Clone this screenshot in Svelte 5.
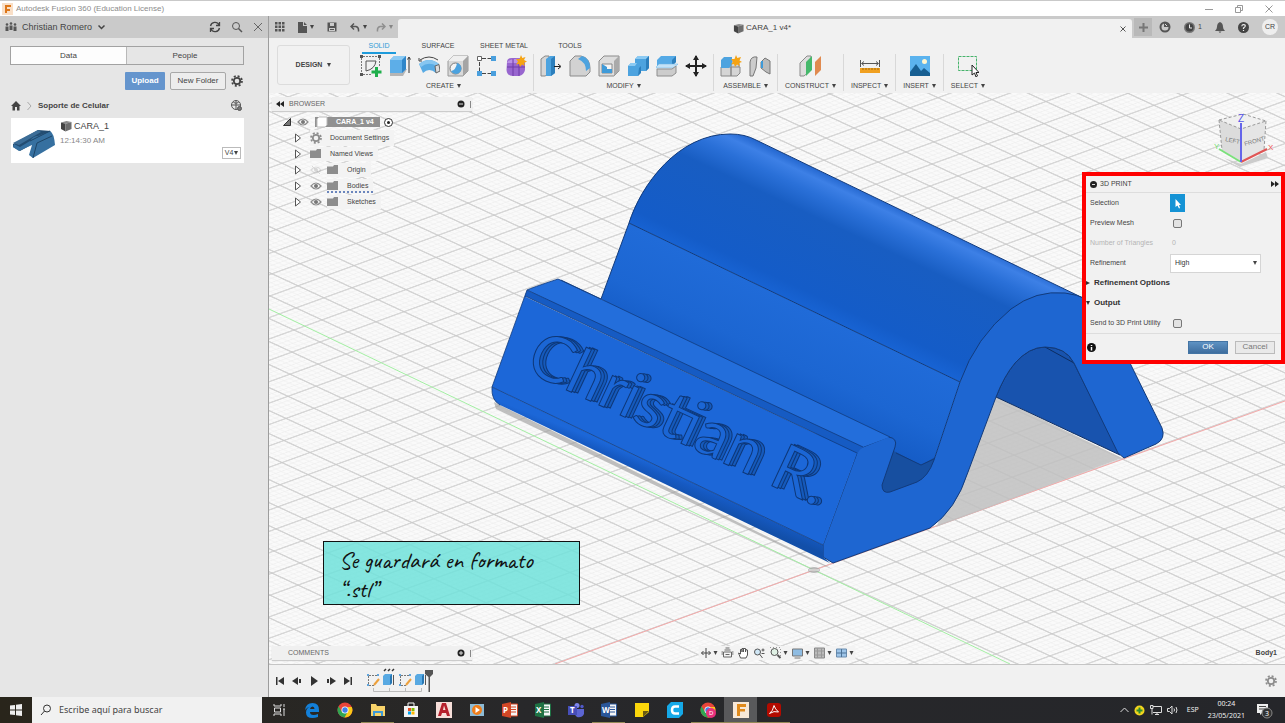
<script lang="ts">
	interface Group {
		label: string;
		icons: string[];
	}

	interface TreeNode {
		label: string;
		icon: 'gear' | 'folder';
		eye?: 'on' | 'off';
		marked?: boolean;
	}

	const groups: Group[] = [
		{ label: 'CREATE', icons: ['sketch', 'extrude', 'revolve', 'hole', 'pattern', 'form'] },
		{ label: 'MODIFY', icons: ['presspull', 'fillet', 'shell', 'combine', 'split', 'move'] },
		{ label: 'ASSEMBLE', icons: ['component', 'joint'] },
		{ label: 'CONSTRUCT', icons: ['plane'] },
		{ label: 'INSPECT', icons: ['measure'] },
		{ label: 'INSERT', icons: ['image'] },
		{ label: 'SELECT', icons: ['select'] }
	];

	const tree: TreeNode[] = [
		{ label: 'Document Settings', icon: 'gear' },
		{ label: 'Named Views', icon: 'folder' },
		{ label: 'Origin', icon: 'folder', eye: 'off' },
		{ label: 'Bodies', icon: 'folder', eye: 'on', marked: true },
		{ label: 'Sketches', icon: 'folder', eye: 'on' }
	];

	const apps = [
		'taskview', 'edge', 'chrome', 'explorer', 'store', 'autocad', 'media', 'powerpoint',
		'excel', 'teams', 'word', 'notes', 'cura', 'chrome-d', 'fusion', 'acrobat'
	];
	const running = ['explorer', 'word', 'chrome-d', 'fusion', 'acrobat'];
	const workspaceTabs = ['SOLID', 'SURFACE', 'SHEET METAL', 'TOOLS'];

	let activeTab = $state('SOLID');
	let panelTab = $state('Data');
	let previewMesh = $state(false);
	let sendToUtility = $state(false);
	let refinement = $state('High');
	let search = $state('');
</script>

{#snippet gear(size: number)}
	<svg width={size} height={size} viewBox="0 0 12 12" fill="none" stroke="currentColor">
		<circle cx="6" cy="6" r="3.2" stroke-width="1.8" />
		<circle cx="6" cy="6" r="5" stroke-width="1.7" stroke-dasharray="2 1.93" />
	</svg>
{/snippet}

{#snippet cube(size: number)}
	<svg width={size} height={size} viewBox="0 0 12 12">
		<path d="M1 2.5 6.5 1 11.5 2 5.5 3.8z" fill="#8a8a8a" />
		<path d="M1 2.5 5.5 3.8V11.5L1 9z" fill="#444" />
		<path d="M5.5 3.8 11.5 2V9L5.5 11.5z" fill="#6d6d6d" />
	</svg>
{/snippet}

{#snippet eye(off: boolean)}
	<svg width="12" height="10" viewBox="0 0 12 10" opacity={off ? 0.25 : 1}>
		<path d="M1 5Q6-1 11 5Q6 11 1 5Z" fill="none" stroke="#8c8c8c" stroke-width="1.2" />
		<circle cx="6" cy="5" r="2" fill="#777" />
		{#if off}<path d="M2 1 10 9" stroke="#777" />{/if}
	</svg>
{/snippet}

{#snippet tool(name: string)}
	<svg width="22" height="22" viewBox="0 0 22 22">
		{#if name === 'sketch'}
			<path d="M3 1.500H18M1.500 3V18M3 19.500H11M19.500 3V11" stroke="#777" stroke-dasharray="2 1" fill="none" />
			<path d="M6 6H16Q15 14 6 16Z" fill="none" stroke="#555" />
			<path d="M0 0h3v3H0zM18 0h3v3h-3zM0 18h3v3H0z" fill="#555" />
			<path d="M16.500 12V22M11.500 17H21.500" stroke="#1faf4b" stroke-width="3" />
		{:else if name === 'extrude'}
			<path d="M1 18 5 14H18L14 21H1z" fill="#b5b5b5" />
			<path d="M1 5 5 1H17V14L13 18H1z" fill="#5daee8" />
			<path d="M1 5 5 1H17L13 5z" fill="#8bcaf3" />
			<path d="M13 5 17 1V14L13 18z" fill="#2f86c9" />
			<path d="M20 18V3M18.500 4.500 20 2 21.500 4.500" stroke="#333" fill="none" />
		{:else if name === 'revolve'}
			<path d="M1 9Q11 1 21 9L18 18Q11 12 5 18Z" fill="#59abe4" />
			<path d="M1 9Q11 1 21 9L19 11Q10 6 3 12Z" fill="#87c6f0" />
			<path d="M17 11 21 9.500 22 16 18 18z" fill="#ddd" stroke="#666" />
			<path d="M2 5Q11-1 20 5M1 3V6H4" fill="none" stroke="#444" />
		{:else if name === 'hole'}
			<path d="M1 6 6 1H21V16L16 21H1z" fill="#d9d9d9" stroke="#999" />
			<path d="M1 6 6 1H21L16 6z" fill="#efefef" />
			<path d="M16 6 21 1V16L16 21z" fill="#a5a5a5" />
			<circle cx="8.500" cy="13.500" r="5.500" fill="#f3f3f3" stroke="#777" />
			<path d="M10 8A5.500 5.500 0 1 1 4 16Q9 15 10 8Z" fill="#4ba2df" />
		{:else if name === 'pattern'}
			<path d="M6 3.500H15M3.500 7V16M6 18.500H15" stroke="#444" stroke-dasharray="4 1.500" />
			<path d="M1.500 1.500h4v4h-4z" fill="#fff" stroke="#666" />
			<path d="M15 1h5v5h-5zM1 16h5v5H1zM15 16h5v5h-5z" fill="#4a9fdd" />
		{:else if name === 'form'}
			<path d="M2 7Q2 3 7 3H15Q20 4 20 9V15Q19 20 14 21H8Q2 21 1.500 15Z" fill="#9866cf" />
			<path d="M3 6Q8 3 16 4L14 8H2z" fill="#bb91e6" />
			<path d="M8 4V21M14 6V21M2 12H20" stroke="#6e3aa8" fill="none" />
			<path d="M16 0 17.300 3 20.500 2 19 5 22 6.500 19 8 20 11 17 9.500 15 12 14 9 11 9.500 13 6.500 11 4 14.500 4z" fill="#f5a313" />
		{:else if name === 'presspull'}
			<path d="M1 4 5 1H9V19L5 21H1z" fill="#d6d6d6" stroke="#888" />
			<path d="M6 4 10 1H15V18L11 21H6z" fill="#4da3df" />
			<path d="M11 4 15 1V18L11 21z" fill="#2c7fbd" />
			<path d="M14 11.500H20M18 9 21 11.500 18 14" stroke="#222" fill="none" />
		{:else if name === 'fillet'}
			<path d="M1 6 6 1H12Q21 3 21 13V17L17 21H1z" fill="#d2d2d2" stroke="#8b8b8b" />
			<path d="M9 4 13 1Q21 3 21 13L17 16Q17 7 9 4z" fill="#4da3df" />
		{:else if name === 'shell'}
			<path d="M1 6 6 1H21V16L16 21H1z" fill="#ddd" stroke="#8b8b8b" />
			<path d="M16 6 21 1V16L16 21z" fill="#aaa" />
			<path d="M4 9H14V18H4z" fill="#f5f5f5" stroke="#888" />
			<path d="M4 18V9L9 12V14H14V18z" fill="#3f9ad8" />
		{:else if name === 'combine'}
			<path d="M8 4 11 1H22V13L19 16H14L11 21H1V11L4 8H8z" fill="#4da3df" />
			<path d="M8 4 11 1H22L19 4zM1 11 4 8H10L8 11z" fill="#8bcaf3" />
			<path d="M19 4 22 1V13L19 16zM12 13 14 11V18L11 21z" fill="#2c7fbd" />
		{:else if name === 'split'}
			<path d="M1 5 5 1H20V7L16 11H1z" fill="#55aae6" />
			<path d="M16 5 20 1V7L16 11z" fill="#2c7fbd" />
			<path d="M0 12 3 9H22L18 13H0z" fill="#c3e2f7" stroke="#6ab2e2" stroke-width=".5" />
			<path d="M1 14H16L20 11V18L16 21H1z" fill="#ccc" stroke="#8e8e8e" />
		{:else if name === 'move'}
			<path d="M11 1V21M1 11H21" stroke="#222" stroke-width="2" />
			<path d="M11 0 14 5H8zM11 22 8 17h6zM0 11 5 8v6zM22 11 17 14V8z" fill="#222" />
		{:else if name === 'component'}
			<path d="M1 12H11V21H1zM11 12H20V18L17 21H11zM11 12V6H19V12" fill="#d5d5d5" stroke="#888" />
			<path d="M1 5 4 2H12V10L9 13H1z" fill="#4da3df" />
			<path d="M16 0 17.300 3 21 2 19.500 5.500 22 7 19 8 20 11 17 9.500 15 12 14 9 11 9.500 13 6.500 11 4 14.500 4z" fill="#f5a313" />
		{:else if name === 'joint'}
			<path d="M1 7Q2 1 8 2L7 13 4 21H1z" fill="#ccc" stroke="#777" />
			<path d="M12 7 16 3 21 6V19L17 17 12 13z" fill="#bbb" stroke="#777" />
			<path d="M13 6V13" stroke="#3f9ad8" stroke-width="2" />
		{:else if name === 'plane'}
			<path d="M1 8 8 1H12V15L5 21H1z" fill="#ddd" stroke="#8b8b8b" />
			<path d="M7 7 13 1V15L7 21z" fill="#45b86b" />
			<path d="M16 7 22 1V15L16 21z" fill="#e08a4f" />
		{:else if name === 'measure'}
			<path d="M1 13H21V18H1z" fill="#f0a020" />
			<path d="M4 13v2M7 13v2M10 13v2M13 13v2M16 13v2M19 13v2" stroke="#a36a08" />
			<path d="M1.500 5V12M20.500 5V12M3 8.500H19M5 6.500 2.500 8.500 5 10.500M17 6.500 19.500 8.500 17 10.500" stroke="#555" fill="none" />
		{:else if name === 'image'}
			<path d="M1 1H21V21H1z" fill="#5bb3ee" />
			<path d="M1 17 7 9 12 16 15 13 21 18V21H1z" fill="#175f92" />
			<circle cx="15.500" cy="6.500" r="2.500" fill="#fff6cf" />
		{:else if name === 'select'}
			<path d="M1.500 1.500H19.500V15.500H1.500z" fill="none" stroke="#46b36b" stroke-dasharray="3 1" />
			<path d="M15 10V20L17.500 18 19 22 20.500 21 19 17.500H22z" fill="#fff" stroke="#222" />
		{/if}
	</svg>
{/snippet}

{#snippet chromeMark()}
	<circle cx="8" cy="8" r="7.500" fill="#e8443a" />
	<path d="M1.500 4.300A7.500 7.500 0 0 0 7.500 15.500L11 10 5 10z" fill="#2fa652" />
	<path d="M14.800 5A7.500 7.500 0 0 1 7.500 15.500L11 9.500V5z" fill="#fbc816" />
	<circle cx="8" cy="8" r="3.500" fill="#fff" />
	<circle cx="8" cy="8" r="2.700" fill="#3f7fea" />
{/snippet}

{#snippet appIcon(name: string)}
	<svg width="16" height="16" viewBox="0 0 16 16">
		{#if name === 'taskview'}
			<path d="M3 2V4H10V2M3 14V12H10V14M3.500 6H9.500V10H3.500zM13 2V5M13 7V14M12 7H14" fill="none" stroke="#ddd" />
		{:else if name === 'edge'}
			<path d="M1 8Q2 1 8.500 1Q15 1 15 8V10H6Q6 13 9.500 13Q12 13 14 12V15Q11 16 8.500 16Q2 16 2 10.500Q2 6 6.500 4.500Q3 5 1 8ZM6 7H10.500Q10.500 4.500 8.500 4.500Q6.500 4.500 6 7Z" fill="#1380da" />
		{:else if name === 'chrome'}
			{@render chromeMark()}
		{:else if name === 'explorer'}
			<path d="M1 2H6L7 4H15V14H1z" fill="#f8d36a" />
			<path d="M3 14V9H13V14H11V11H5V14z" fill="#3e9ad6" />
		{:else if name === 'store'}
			<path d="M1 4H15V15H1z" fill="#f4f4f4" />
			<path d="M5 4V1H11V4" stroke="#f4f4f4" fill="none" />
			<path d="M5 6h3v3H5z" fill="#e74e27" /><path d="M8.500 6h3v3h-3z" fill="#7fba00" />
			<path d="M5 9.500h3v3H5z" fill="#00a3ee" /><path d="M8.500 9.500h3v3h-3z" fill="#ffb901" />
		{:else if name === 'autocad'}
			<path d="M0 0H16V16H0z" fill="#f6ded9" />
			<path d="M2 14 6 1H10L14 14H11L10 11H6L5 14zM7 8H9.500L8 3.500z" fill="#b51f2b" fill-rule="evenodd" />
		{:else if name === 'media'}
			<path d="M1 2H15V14H1z" fill="#8dbbd6" />
			<circle cx="8" cy="8" r="5" fill="#ef7d1a" /><path d="M6.500 5 11 8 6.500 11z" fill="#fff" />
		{:else if name === 'powerpoint' || name === 'excel' || name === 'word'}
			{@const color = { powerpoint: '#d24726', excel: '#1f7244', word: '#2a5699' }[name]}
			<path d="M7 2H15.500V14H7z" fill="#f5f5f5" stroke={color} />
			<path d="M9 5H14M9 7.500H14M9 10H14" stroke={color} />
			<path d="M0 2 9 0V16L0 14z" fill={color} />
			<text x="1" y="11" font-size="8" font-weight="bold" fill="#fff">{name === 'powerpoint' ? 'P' : name === 'excel' ? 'X' : 'W'}</text>
		{:else if name === 'teams'}
			<circle cx="9" cy="3.500" r="2.500" fill="#7b83eb" /><circle cx="14" cy="4.500" r="1.700" fill="#5059c9" />
			<path d="M6 7H16V12Q14 16 9 15Q6 13 6 7z" fill="#5c65d3" />
			<path d="M0 4H9V13H0z" fill="#464eb8" />
			<text x="2" y="11" font-size="8" font-weight="bold" fill="#fff">T</text>
		{:else if name === 'notes'}
			<path d="M1 1H15V10L9 15H1z" fill="#fbd60b" /><path d="M9 9H15L9 15z" fill="#695a12" />
		{:else if name === 'cura'}
			<path d="M4 0H16V12L12 16H0V4z" fill="#15a9e8" />
			<path d="M12 4.500H8Q5 4.500 5 8Q5 11.500 8 11.500H12" fill="none" stroke="#fff" stroke-width="2.500" />
		{:else if name === 'chrome-d'}
			{@render chromeMark()}
			<circle cx="11" cy="11" r="5" fill="#e8307c" />
			<text x="9" y="13" font-size="6" fill="#fff">D</text>
		{:else if name === 'fusion'}
			<path d="M0 0H16V16H0z" fill="#f8e8d7" />
			<path d="M4 2H13V5H7V7H12V9.500H7V14H4z" fill="#e08a1c" />
		{:else if name === 'acrobat'}
			<rect x="1" y="1" width="14" height="14" rx="3" fill="#b30b00" />
			<path d="M8 3.500Q9 7 12.500 10Q8 8.500 3.500 11.500Q7 9 8 3.500Z" fill="none" stroke="#fff" />
		{/if}
	</svg>
{/snippet}

<div class="desktop">
	<header class="title-bar">
		<svg width="11" height="12" viewBox="0 0 11 12">
			<path d="M0 0H11V12H0z" fill="#f9dfc7" /><path d="M3 2H9V4H5V6H8V8H5V10H3z" fill="#dd7618" />
		</svg>
		<span class="title">Autodesk Fusion 360 (Education License)</span>
		<div class="window-buttons">
			<button aria-label="Minimize"><svg width="8" height="8"><path d="M0 4.500H8" /></svg></button>
			<button aria-label="Restore"><svg width="8" height="8"><path d="M.5 2.500H5.500V7.500H.5zM2.500 2.500V.5H7.500V5.500H5.500" /></svg></button>
			<button aria-label="Close"><svg width="8" height="8"><path d="M.5.5 7.500 7.500M7.500.5.5 7.500" /></svg></button>
		</div>
	</header>

	<div class="app">
		<aside class="data-panel">
			<div class="panel-header">
				<svg width="12" height="10" viewBox="0 0 12 10" fill="#555">
					<circle cx="2" cy="2.500" r="1.300" /><circle cx="6" cy="1.500" r="1.300" /><circle cx="10" cy="2.500" r="1.300" />
					<path d="M.5 4.500h3V9h-3zM4.500 3.500h3V8h-3zM8.500 4.500h3V9h-3z" />
				</svg>
				<button class="team">Christian Romero
					<svg width="7" height="5" viewBox="0 0 7 5"><path d="M.5.5 3.500 3.500 6.500.5" fill="none" stroke="#444" stroke-width="1.500" /></svg>
				</button>
				<button class="push" aria-label="Refresh">
					<svg width="12" height="12" viewBox="0 0 12 12" fill="none" stroke="#444" stroke-width="1.300"><path d="M1.500 5A4.500 4.500 0 0 1 10 4M10.500 7A4.500 4.500 0 0 1 2 8M10.500 1V4.500H7M1.500 11V7.500H5" /></svg>
				</button>
				<button aria-label="Search">
					<svg width="12" height="12" viewBox="0 0 12 12" fill="none" stroke="#555"><circle cx="5" cy="5" r="3.500" /><path d="M7.500 7.500 11 11" stroke-width="1.500" /></svg>
				</button>
				<button aria-label="Close panel">
					<svg width="10" height="10" viewBox="0 0 10 10" stroke="#666"><path d="M1 1 9 9M9 1 1 9" /></svg>
				</button>
			</div>
			<div class="panel-body">
				<div class="segmented">
					{#each ['Data', 'People'] as tab (tab)}
						<button class:active={panelTab === tab} onclick={() => (panelTab = tab)}>{tab}</button>
					{/each}
				</div>
				<div class="panel-actions">
					<button class="upload">Upload</button>
					<button class="new-folder">New Folder</button>
					<button class="plain" aria-label="Settings">{@render gear(12)}</button>
				</div>
				<div class="breadcrumb">
					<svg width="10" height="10" viewBox="0 0 10 10" fill="#444"><path d="M0 5 5 0 10 5H8.500V9.500H6V6H4V9.500H1.500V5z" /></svg>
					<svg width="5" height="10" viewBox="0 0 5 10"><path d="M.5 1 4 5 .5 9" fill="none" stroke="#aaa" /></svg>
					<strong>Soporte de Celular</strong>
					<svg class="push" width="11" height="11" viewBox="0 0 11 11" fill="none" stroke="#555">
						<circle cx="5" cy="5" r="4.500" /><path d="M.5 5H9.500M5 .5V9.500M2.500 2.500Q5 4 7.500 2.500" /><circle cx="8.500" cy="8.500" r="2" fill="#777" />
					</svg>
				</div>
				<div class="file-card">
					<svg width="45" height="45" viewBox="0 0 45 45">
						<path d="M2 26 27 12 40 13 18 28 9 33 2 29z" fill="#234d72" />
						<path d="M2 25 27 12 30 14 8 27z" fill="#3c6d97" />
						<path d="M19 23Q22 18 27 18L39 13Q43 15 44 27L22 40 18 37 21 27 8 33 2 29 3 26 9 29z" fill="#3670a0" />
						<path d="M19 23 39 13M22 40 26 25 41 18" stroke="#1e4567" fill="none" />
					</svg>
					<div class="file-info">
						<span class="file-name">{@render cube(12)} CARA_1</span>
						<span class="file-time">12:14:30 AM</span>
					</div>
					<button class="version">V4<i class="caret"></i></button>
				</div>
			</div>
		</aside>

		<main class="workspace">
			<div class="tab-bar">
				<div class="quick-access">
					<button aria-label="Show data panel"><svg width="10" height="10" fill="#555"><path d="M0 0h2.500v2.500H0zM3.500 0H6v2.500H3.500zM7 0h2.500v2.500H7zM0 3.500h2.500V6H0zM3.500 3.500H6V6H3.500zM7 3.500h2.500V6H7zM0 7h2.500v2.500H0zM3.500 7H6v2.500H3.500zM7 7h2.500v2.500H7z" /></svg></button>
					<button aria-label="File"><svg width="9" height="11" fill="#555"><path d="M0 0H5V4H9V11H0zM6 0 9 3H6z" /></svg><i class="caret"></i></button>
					<button aria-label="Save"><svg width="10" height="10" viewBox="0 0 10 10"><path d="M.5.5H9.500V9.500H.5z" fill="#555" /><path d="M3 1H7V4H3zM2 6H8V9H2z" fill="#ccc" /><path d="M3 7.500H7" stroke="#555" /></svg></button>
					<button aria-label="Undo"><svg width="10" height="9" viewBox="0 0 10 9" fill="none" stroke="#555" stroke-width="1.500"><path d="M4 .5 1 3.500 4 6.500M1 3.500H6Q9 4 8.500 8.500" /></svg><i class="caret"></i></button>
					<button class="dim" aria-label="Redo"><svg width="10" height="9" viewBox="0 0 10 9" fill="none" stroke="#555" stroke-width="1.500"><path d="M6 .5 9 3.500 6 6.500M9 3.500H4Q1 4 1.500 8.500" /></svg><i class="caret"></i></button>
				</div>
				<div class="document-tab">
					<span>{@render cube(11)} CARA_1 v4*</span>
					<button aria-label="Close tab"><svg width="6" height="6" stroke="#555"><path d="M.5.5 5.500 5.500M5.500.5.5 5.500" /></svg></button>
				</div>
				<div class="account">
					<button class="new-tab" aria-label="New tab"><svg width="9" height="9"><path d="M4.500 0V9M0 4.500H9" stroke="#777" stroke-width="2" /></svg></button>
					<button aria-label="Extensions"><svg width="12" height="12" viewBox="0 0 12 12"><circle cx="6" cy="6" r="4.500" fill="none" stroke="#555" stroke-width="2" /><path d="M5 1V6H10V3z" fill="#555" /><path d="M6 3 8 5" stroke="#ddd" /></svg></button>
					<button aria-label="Job status"><svg width="11" height="11" viewBox="0 0 11 11"><circle cx="5.500" cy="5.500" r="5.500" fill="#777" /><circle cx="5.500" cy="5.500" r="4" fill="#444" /><path d="M5.500 2.500V6H8" stroke="#eee" fill="none" /></svg><small>1</small></button>
					<button aria-label="Notifications"><svg width="10" height="11" fill="#555"><path d="M5 0Q8 1 8 5Q8 7 10 9H0Q2 7 2 5Q2 1 5 0zM3.500 9.500h3L5 11z" /></svg></button>
					<button aria-label="Help"><svg width="11" height="11"><circle cx="5.500" cy="5.500" r="5.500" fill="#444" /><path d="M3.800 4.200Q4 2.500 5.600 2.500Q7.500 2.700 7.200 4.200Q7 5 5.500 6V7M5.500 8V9" fill="none" stroke="#eee" stroke-width="1.200" /></svg></button>
					<button class="avatar">CR</button>
				</div>
			</div>

			<div class="ribbon">
				<button class="workspace-switch">DESIGN<i class="caret"></i></button>
				<div class="ribbon-main">
					<nav class="ribbon-tabs">
						{#each workspaceTabs as tab (tab)}
							<button class:active={activeTab === tab} onclick={() => (activeTab = tab)}>{tab}</button>
						{/each}
					</nav>
					<div class="groups">
						{#each groups as group (group.label)}
							<div class="group">
								<div class="group-icons">
									{#each group.icons as name (name)}
										<button aria-label={name}>{@render tool(name)}</button>
									{/each}
								</div>
								<button class="group-label">{group.label}<i class="caret"></i></button>
							</div>
						{/each}
					</div>
				</div>
			</div>

			<div class="viewport">
				<!-- Scene coordinates are window pixels, origin at the window's top left -->
				<svg class="scene" viewBox="269 93 1016 571" preserveAspectRatio="xMidYMid slice">
					<defs>
						<pattern id="grid" width="5" height="5" patternUnits="userSpaceOnUse" patternTransform="matrix(5.2 2.4 5.6 -2.02 814 570)">
							<path d="M1 0V5M2 0V5M3 0V5M4 0V5M0 1H5M0 2H5M0 3H5M0 4H5" stroke="#f0f0f0" stroke-width=".2" />
							<path d="M0 0H5V5H0z" fill="none" stroke="#c8c8c8" stroke-width=".24" />
						</pattern>
						<linearGradient id="ridge" gradientUnits="userSpaceOnUse" x1="900" y1="208" x2="825" y2="368">
							<stop offset="0" stop-color="#2467cf" />
							<stop offset=".05" stop-color="#3d80e6" />
							<stop offset=".13" stop-color="#2a70d8" />
							<stop offset=".25" stop-color="#185dc2" />
							<stop offset=".65" stop-color="#145cc8" />
							<stop offset=".84" stop-color="#1b6be0" />
							<stop offset="1" stop-color="#1d6be0" />
						</linearGradient>
						<linearGradient id="wall" gradientUnits="userSpaceOnUse" x1="810" y1="310" x2="770" y2="395">
							<stop offset="0" stop-color="#206bd8" />
							<stop offset=".6" stop-color="#1c66d2" />
							<stop offset="1" stop-color="#155cc6" />
						</linearGradient>
						<linearGradient id="roll" gradientUnits="userSpaceOnUse" x1="660" y1="465" x2="652" y2="485">
							<stop offset="0" stop-color="#1c67d8" />
							<stop offset=".4" stop-color="#165ac3" />
							<stop offset="1" stop-color="#124fa9" />
						</linearGradient>
					</defs>
					<rect x="269" y="93" width="1016" height="571" fill="#fafafa" />
					<rect x="269" y="93" width="1016" height="571" fill="url(#grid)" />
					<path d="M269 309 814 570 1010 664" stroke="#a3efa3" fill="none" />
					<path d="M555 664 814 570 1285 401" stroke="#f4aaaa" fill="none" />
					<path d="M996 397 1122 458 936 527 960 480z" fill="#bfbfbf" opacity=".85" />
					<path d="M494 402 825 565 832 569 815 562 496 409z" fill="#999" opacity=".6" />

					<g stroke-linejoin="round">
						<path d="M996 397Q1004 376 1015 363Q1029 347 1045 347Q1066 347 1074 363L1120 455z" fill="#1853ae" stroke="#102f63" />
						<path d="M1045 347 1074 363" stroke="#0c2d62" />
						<path d="M601 299 629 223 960 382 934 460 916 488 885 490 850 455z" fill="url(#wall)" />
						<path d="M892 450 921 465 937 456 926 484 885 496 878 485z" fill="#174fa0" />
						<path d="M896 453 921 465 934 459" fill="none" stroke="#123b7c" />
						<path d="M629 223C641 185 678 134 730 134Q745 134 756 140L1083 298Q1000 290 960 382z" fill="url(#ridge)" />
						<path d="M730 134C678 134 641 185 629 223L601 299M730 134Q745 134 756 140L1083 298M629 223 960 382" fill="none" stroke="#123b7c" />
						<path d="M960 382Q976 337 1011 309Q1036 290 1065 293Q1090 296 1100 312L1128 359 1162 428Q1166 439 1156 444L1124 458 1118 453 1074 363Q1066 347 1045 347Q1029 347 1015 363Q1004 376 996 397L968 472Q956 510 930 528L833 563 823 557 823 545 857 453Q859 448 863 447L888 437Q898 438 895 447L882 485Q882 494 890 492L917 482Q928 477 934 460Z" fill="#1e66d1" stroke="#123b7c" />
						<path d="M527 290Q531 288 558 279L561 280 890 437 863 447 857 453z" fill="#236edb" />
						<path d="M527 290 526 297 857 453 823 545 492 387z" fill="#1c67d8" />
						<path d="M527 290 863 447 857 453 525 296z" fill="#165bc3" />
						<path d="M492 387 823 545 823 557 830 563 500 405Q491 400 492 387z" fill="url(#roll)" />
						<path d="M527 290 863 447M525 296 857 453M492 387 823 545M561 280 890 437M527 290Q531 288 558 279L601 299M527 290 492 387Q491 400 500 405" fill="none" stroke="#123b7c" stroke-width=".8" />
					</g>

					<g class="engraving" transform="translate(524 369) rotate(25)">
						<text x="6" y="-1" fill="#155abc">Christian R.</text>
						<text x="3" y="0" fill="#155abc">Christian R.</text>
						<text x="0" y="1" fill="#1b66d5">Christian R.</text>
					</g>

					<ellipse cx="814" cy="570" rx="6" ry="3" fill="#aaa" opacity=".8" />
					<path d="M809 570H819" stroke="#eee" />

					<g class="view-cube">
						<path d="M1224 158 1241 164 1266 152 1268 158 1240 167z" fill="#ccc" />
						<path d="M1219 120 1243 114 1266 121 1241 129z" fill="#f0f0f0" />
						<path d="M1219 120 1241 129V161L1222 150z" fill="#dcdcdc" />
						<path d="M1266 121 1241 129V161L1264 150z" fill="#e5e5e5" />
						<path d="M1219 120 1243 114 1266 121 1241 129zM1219 120 1222 150M1266 121 1264 150" fill="none" stroke="#999" stroke-dasharray="3 2" />
						<path d="M1241 162 1219 149" stroke="#7be07b" stroke-width="2" />
						<path d="M1241 162 1267 149" stroke="#e05555" stroke-width="2" />
						<path d="M1241 162V123" stroke="#6565ea" stroke-width="2" />
						<text x="1238" y="122" font-size="10" fill="#5555e8">Z</text>
						<text x="1214" y="149" font-size="8" fill="#70e070">Y</text>
						<text x="1268" y="150" font-size="8" fill="#ee5555">X</text>
						<text x="1225" y="141" font-size="6" fill="#777" transform="rotate(12 1225 141)">LEFT</text>
						<text x="1245" y="146" font-size="6" fill="#777" transform="rotate(-16 1245 146)">FRONT</text>
					</g>
				</svg>

				<div class="dock">
					<section class="browser">
						<div class="dock-bar">
							<svg width="8" height="6"><path d="M4 0V6L0 3zM8 0V6L4 3z" fill="#222" /></svg>
							<span>BROWSER</span>
							<svg class="push" width="8" height="8"><circle cx="4" cy="4" r="3.500" fill="#222" /><path d="M2 4H6" stroke="#ddd" /></svg>
							<i class="grip"></i>
						</div>
						<div class="tree">
							<div class="root-row">
								<svg width="8" height="8"><path d="M7.500.5V7.500H.5z" fill="#777" stroke="#333" /></svg>
								{@render eye(false)}
								<span class="root-name">
									<svg width="12" height="12" viewBox="0 0 12 12"><path d="M1 3 3 1H11V9L9 11H1z" fill="#fff" stroke="#bbb" /></svg>
									CARA_1 v4
								</span>
								<svg width="9" height="9"><circle cx="4.500" cy="4.500" r="4" fill="#fff" stroke="#333" /><circle cx="4.500" cy="4.500" r="1.500" fill="#222" /></svg>
							</div>
							{#each tree as node (node.label)}
								<div class="tree-row" class:has-eye={node.eye}>
									<svg width="6" height="10"><path d="M.5 1 5.500 5 .5 9z" fill="#fff" stroke="#555" /></svg>
									{#if node.eye}{@render eye(node.eye === 'off')}{/if}
									<span class="node" class:marked={node.marked}>
										{#if node.icon === 'gear'}
											{@render gear(12)}
										{:else}
											<svg width="12" height="10" fill="#8d8d8d"><path d="M0 1.500H6L7 0H11V9H0z" /></svg>
										{/if}
										<span>{node.label}</span>
									</span>
								</div>
							{/each}
						</div>
					</section>
					<div class="dock-bar comments">
						<span>COMMENTS</span>
						<svg class="push" width="8" height="8"><circle cx="4" cy="4" r="3.500" fill="#222" /><path d="M2 4H6M4 2V6" stroke="#ddd" /></svg>
						<i class="grip"></i>
					</div>
				</div>

				<p class="note">Se guardará en formato “.stl”</p>

				<form class="dialog" onsubmit={(e) => e.preventDefault()}>
					<div class="dialog-title">
						<svg width="7" height="7"><circle cx="3.500" cy="3.500" r="3.500" fill="#222" /><path d="M2 3.500H5" stroke="#ddd" /></svg>
						3D PRINT
						<svg class="push" width="8" height="6"><path d="M0 0V6L4 3zM4 0V6L8 3z" fill="#222" /></svg>
					</div>
					<div class="field">
						<span>Selection</span>
						<button type="button" class="pick" aria-label="Pick body"><svg width="8" height="11"><path d="M1.500 1V9L3.500 7.500 5 10.500 6 10 5 7H7z" fill="#fff" /></svg></button>
					</div>
					<div class="field">
						<label for="mesh">Preview Mesh</label>
						<input id="mesh" type="checkbox" bind:checked={previewMesh} />
					</div>
					<div class="field disabled"><span>Number of Triangles</span><span>0</span></div>
					<div class="field">
						<label for="refinement">Refinement</label>
						<div class="drop">
							<select id="refinement" bind:value={refinement}>
								<option>High</option>
								<option>Medium</option>
								<option>Low</option>
							</select>
							<i class="caret"></i>
						</div>
					</div>
					<button type="button" class="fold"><i class="caret right"></i>Refinement Options</button>
					<button type="button" class="fold"><i class="caret"></i>Output</button>
					<div class="field">
						<label for="utility">Send to 3D Print Utility</label>
						<input id="utility" type="checkbox" bind:checked={sendToUtility} />
					</div>
					<div class="dialog-footer">
						<svg width="9" height="9"><circle cx="4.500" cy="4.500" r="4.500" fill="#111" /><path d="M4.500 2V3M4.500 4V7.500" stroke="#fff" stroke-width="1.500" /></svg>
						<button class="ok push">OK</button>
						<button type="button" class="cancel">Cancel</button>
					</div>
				</form>

				<div class="nav-bar">
					<button aria-label="Orbit"><svg width="11" height="12" fill="none" stroke="#444"><path d="M5.500 1V11M1 6H10M3 4 1 6 3 8M8 4 10 6 8 8" /></svg><i class="caret"></i></button>
					<button aria-label="Look at"><svg width="12" height="12" fill="none" stroke="#666"><path d="M2 5H10V10H2zM3 3H9M4 1H8M.5 4V8M11.500 4V8M4 7.500H8" /></svg></button>
					<button aria-label="Pan"><svg width="12" height="12" fill="#fff" stroke="#555"><path d="M3 11 1 6 3 7V2.500H4.500V5 1.500H6V5 1.500H8V5L8.500 2.500 10 3V8L8.500 11z" /></svg></button>
					<button aria-label="Zoom"><svg width="12" height="12" fill="none" stroke="#555"><circle cx="4" cy="5" r="3" fill="#cfe6f5" /><path d="M6 7 9 11M8 3H11M9.500 1.500V4.500M8 6.500H11" /></svg></button>
					<button aria-label="Fit"><svg width="12" height="12" fill="none" stroke="#555"><circle cx="5" cy="5" r="3.500" fill="#dff0e4" /><path d="M8 8 11 11" stroke-width="2" /><path d="M.5.5H11V11" stroke-dasharray="1 2" stroke="#999" /></svg><i class="caret"></i></button>
					<button aria-label="Display"><svg width="12" height="12"><path d="M1 2H11V9H1z" fill="#8fbce2" stroke="#777" /><path d="M3 11H9" stroke="#777" /></svg><i class="caret"></i></button>
					<button aria-label="Grid"><svg width="12" height="12"><path d="M1 1H11V11H1z" fill="#bbb" stroke="#888" /><path d="M4 1V11M8 1V11M1 4H11M1 8H11" stroke="#999" /></svg><i class="caret"></i></button>
					<button aria-label="Viewports"><svg width="12" height="12"><path d="M1 2H11V10H1z" fill="#9dc4e8" stroke="#6a8cae" /><path d="M6 2V10M1 6H11" stroke="#4d7397" /></svg><i class="caret"></i></button>
				</div>
				<strong class="selection-name">Body1</strong>
			</div>

			<footer class="timeline">
				<div class="transport">
					<button aria-label="To start"><svg width="10" height="10"><path d="M1 1H2.500V9H1zM9 1V9L3 5z" /></svg></button>
					<button aria-label="Step back"><svg width="10" height="10"><path d="M6 1V9L0 5zM7 3H9V7H7z" /></svg></button>
					<button aria-label="Play"><svg width="10" height="10"><path d="M2 0V10L9 5z" /></svg></button>
					<button aria-label="Step forward"><svg width="10" height="10"><path d="M4 1V9L10 5zM1 3H3V7H1z" /></svg></button>
					<button aria-label="To end"><svg width="10" height="10"><path d="M1 1V9L7 5zM7.500 1H9V9H7.500z" /></svg></button>
				</div>
				<svg width="68" height="26" viewBox="0 0 68 26">
					{#each [0, 32] as x (x)}
						<g transform="translate({x} 0)">
							<path d="M2 7.500H11M1.500 8V16M2 17.500H8" stroke="#777" stroke-dasharray="2 1" fill="none" />
							<path d="M0 6h2v2H0zM10 6h2v2h-2zM0 16h2v2H0z" fill="#60a5dd" />
							<path d="M7 17 12 11" stroke="#eda13d" stroke-width="2" />
							<path d="M16 8 18 6H25V15L23 17H16z" fill="#58a9e2" />
							<path d="M23 8 25 6V15L23 17z" fill="#2877b3" />
							<path d="M26.500 17V7" stroke="#555" />
						</g>
					{/each}
					<path d="M17 3 19 1M21 3 23 1M25 3 27 1" stroke="#333" stroke-width="1.500" />
					<path d="M6.500 20V23.500H54.500V20M22.500 20V23M38.500 20V23" fill="none" stroke="#bbb" />
					<path d="M58 2H66V6L63 9V24H61.500V9L58 6z" fill="#555" />
				</svg>
				<button class="push" aria-label="Timeline settings">{@render gear(12)}</button>
			</footer>
		</main>
	</div>

	<div class="taskbar">
		<button class="start" aria-label="Start"><svg width="12" height="12" fill="#eee"><path d="M0 1.500 5 1V5.500H0zM6 .8 12 0V5.500H6zM0 6.500H5V11L0 10.500zM6 6.500H12V12L6 11.200z" /></svg></button>
		<label class="search">
			<svg width="12" height="12" fill="none" stroke="#333"><circle cx="7" cy="4.500" r="3.500" /><path d="M4.500 7 1 11" /></svg>
			<input type="text" placeholder="Escribe aquí para buscar" bind:value={search} />
		</label>
		<div class="apps">
			{#each apps as name (name)}
				<button class:running={running.includes(name)} class:current={name === 'fusion'} aria-label={name}>{@render appIcon(name)}</button>
			{/each}
		</div>
		<div class="tray">
			<svg width="9" height="6"><path d="M.5 5 4.500 1 8.500 5" fill="none" stroke="#ddd" /></svg>
			<svg width="11" height="11"><circle cx="5.500" cy="5.500" r="5" fill="#f2d51d" /><path d="M5.500 2.500V8.500M2.500 5.500H8.500" stroke="#2d8b30" stroke-width="2" /></svg>
			<svg width="12" height="10" fill="none" stroke="#ddd"><path d="M3 1.500H11.500V7.500H3M.5.5H3V3.500H.5zM2 4V9.500M5 9.500H9M7 8V9" /></svg>
			<svg width="11" height="10" fill="none" stroke="#ddd"><path d="M.5 3.500H2.500L5 1V9L2.500 6.500H.5zM7 3.500Q8 5 7 6.500M9 2Q11 5 9 8" /></svg>
			<span class="lang">ESP</span>
			<time>00:24<br />23/05/2021</time>
			<svg width="17" height="18" viewBox="0 0 17 18"><path d="M1 3H12V12H6L4 14V12H1z" fill="#eee" /><path d="M3 5.500H10M3 8H10" stroke="#444" /><circle cx="11" cy="12" r="5" fill="#333" stroke="#888" /><text x="9" y="15" font-size="7" fill="#fff">3</text></svg>
		</div>
	</div>
</div>

<style>
	:global(body) {
		font-family: 'Liberation Sans', Arial, sans-serif;
		font-size: 8px;
		color: #444;
	}

	.desktop {
		display: flex;
		flex-direction: column;
		min-height: 100vh;
		line-height: 10px;
	}

	button {
		display: flex;
		align-items: center;
		justify-content: center;
		gap: 3px;
		padding: 0;
		border: none;
		background: none;
		color: inherit;
		font: inherit;
		white-space: nowrap;
	}

	svg {
		display: block;
		flex-shrink: 0;
	}

	.push {
		margin-left: auto;
	}

	.caret {
		border: 2px solid transparent;
		border-top: 4px solid currentColor;
		border-bottom: none;
	}

	.caret.right {
		border: 2px solid transparent;
		border-left: 4px solid currentColor;
		border-right: none;
	}

	.title-bar {
		display: flex;
		align-items: center;
		gap: 3px;
		height: 15px;
		padding-left: 2px;
		border-top: 1px solid #c9c9c9;
		background: #fff;
	}

	.title {
		color: #8b8b8b;
	}

	.window-buttons {
		display: flex;
		gap: 22px;
		margin-left: auto;
		padding-right: 12px;
		fill: none;
		stroke: #999;
	}

	.app {
		display: flex;
		flex: 1;
	}

	.data-panel {
		flex: 0 0 268px;
		border-right: 1px solid #9d9d9d;
		background: #e6e6e6;
	}

	.panel-header {
		display: flex;
		align-items: center;
		gap: 10px;
		height: 22px;
		padding: 0 5px;
		background: #cacaca;
	}

	.team {
		gap: 6px;
		margin-left: -5px;
		font-size: 9px;
	}

	.panel-body {
		display: flex;
		flex-direction: column;
		padding: 8px 24px 8px 10px;
	}

	.segmented {
		display: grid;
		grid-template-columns: 1fr 1fr;
		height: 17px;
		border: 1px solid #a2a2a2;
	}

	.segmented .active {
		border-right: 1px solid #b9b9b9;
		background: #fdfdfd;
	}

	.panel-actions {
		display: flex;
		justify-content: flex-end;
		gap: 5px;
		margin: 7px 1px 0 0;
	}

	.panel-actions button {
		height: 18px;
	}

	.upload {
		width: 40px;
		background: #6595cd;
		border-radius: 1px;
		color: #fff;
		font-weight: bold;
	}

	.panel-actions .new-folder {
		width: 56px;
		border: 1px solid #a8a8a8;
		border-radius: 2px;
		background: #ededed;
	}

	.breadcrumb {
		display: flex;
		align-items: center;
		gap: 6px;
		height: 25px;
		padding: 3px 2px 0 1px;
	}

	.file-card {
		display: flex;
		height: 45px;
		margin-left: 1px;
		background: #fff;
	}

	.file-info {
		display: flex;
		flex-direction: column;
		gap: 4px;
		padding: 2px 4px;
	}

	.file-name {
		display: flex;
		align-items: center;
		gap: 2px;
		font-size: 9px;
	}

	.file-time {
		color: #888;
	}

	.version {
		align-self: flex-end;
		width: 19px;
		height: 12px;
		margin: 0 3px 4px auto;
		border: 1px solid #bbb;
		font-size: 7px;
		gap: 1px;
	}

	.workspace {
		display: flex;
		flex: 1;
		flex-direction: column;
		min-width: 0;
	}

	.tab-bar {
		display: flex;
		height: 22px;
		background: #cacaca;
	}

	.quick-access {
		display: flex;
		align-items: center;
		gap: 13px;
		width: 123px;
		padding-left: 6px;
	}

	.quick-access .dim {
		margin-left: -4px;
		opacity: 0.5;
	}

	.document-tab {
		display: flex;
		flex: 1;
		align-items: center;
		justify-content: center;
		margin-top: 3px;
		padding: 0 6px;
		border-radius: 3px 3px 0 0;
		background: #f1f1f1;
	}

	.document-tab span {
		display: flex;
		gap: 2px;
		margin: auto;
	}

	.account {
		display: flex;
		align-items: center;
		gap: 13px;
		padding: 0 7px 0 2px;
	}

	.account .new-tab {
		width: 18px;
		height: 18px;
		margin-right: -6px;
		background: #b9b9b9;
	}

	.account small {
		font-size: 7px;
	}

	.account .avatar {
		width: 16px;
		height: 16px;
		border-radius: 50%;
		background: #eee;
		font-size: 7px;
	}

	.ribbon {
		display: flex;
		gap: 10px;
		padding-left: 8px;
		background: #f1f1f1;
		font-size: 7px;
	}

	.workspace-switch {
		width: 73px;
		height: 40px;
		margin-top: 7px;
		border: 1px solid #dcdcdc;
		border-radius: 3px;
		font-weight: bold;
		gap: 5px;
	}

	.ribbon-tabs {
		display: flex;
		height: 16px;
		gap: 25px;
		padding-left: 2px;
	}

	.ribbon-tabs button {
		min-width: 34px;
		padding-top: 1px;
		border-bottom: 2px solid transparent;
	}

	.ribbon-tabs .active {
		border-color: #1e9bdb;
		color: #2e9ad6;
	}

	.groups {
		display: flex;
		margin-left: -6px;
		padding-bottom: 2px;
	}

	.group {
		display: flex;
		flex-direction: column;
		align-items: center;
		padding: 1px 6px 0;
		border-right: 1px solid #d8d8d8;
	}

	.group:nth-child(n + 4) {
		padding: 1px 7px 0;
	}

	.group:last-child {
		border: none;
	}

	.group-icons {
		display: flex;
		gap: 7px;
	}

	.group-label {
		height: 14px;
		padding-top: 4px;
	}

	.viewport {
		position: relative;
		display: flex;
		flex: 1;
		min-height: 480px;
		overflow: hidden;
	}

	.scene {
		position: absolute;
		inset: 0;
		width: 100%;
		height: 100%;
	}

	.engraving text {
		font-family: Lato, 'Liberation Sans', sans-serif;
		font-size: 64px;
		stroke: #0e3777;
		stroke-width: 1px;
	}

	.dock {
		position: relative;
		display: flex;
		flex-direction: column;
		justify-content: space-between;
		width: 200px;
		padding: 4px 3px;
		font-size: 7px;
	}

	.dock-bar {
		display: flex;
		align-items: center;
		gap: 5px;
		height: 14px;
		padding: 0 1px 0 4px;
		background: #f0f0f0;
		box-shadow: 0 1px 1px #ccc;
		color: #666;
	}

	.comments {
		padding-left: 16px;
	}

	.grip {
		height: 7px;
		border-left: 1px solid #888;
	}

	.tree {
		padding: 3px 0 0 11px;
	}

	.root-row,
	.tree-row {
		display: flex;
		align-items: center;
		gap: 6px;
		height: 16px;
	}

	.tree-row {
		gap: 9px;
		padding-left: 12px;
	}

	.root-name {
		display: flex;
		align-items: center;
		gap: 8px;
		height: 10px;
		margin-right: -2px;
		padding: 0 6px 0 1px;
		background: #919191;
		color: #fff;
		font-weight: bold;
	}

	.node {
		display: flex;
		align-items: center;
		gap: 8px;
		padding: 2px 5px 2px 0;
		background: #f3f3f3;
		color: #8d8d8d;
	}

	.has-eye .node {
		margin-left: -4px;
	}

	.node span {
		color: #444;
	}

	.marked {
		padding-bottom: 0;
		border-bottom: 2px dotted #6b86bd;
	}

	.note {
		position: absolute;
		bottom: 59px;
		left: 54px;
		width: 210px;
		height: 58px;
		margin: 0;
		padding: 4px 30px 0 15px;
		border: 1px solid #111;
		background: rgba(112, 226, 219, 0.85);
		color: #111;
		font-family: Caveat, Lato, sans-serif;
		font-size: 24px;
		line-height: 29px;
	}

	.dialog {
		position: absolute;
		top: 79px;
		right: 0;
		width: 195px;
		border: 4px solid #f00;
		background: #f1f1f1;
		font-size: 7px;
	}

	.dialog-title {
		display: flex;
		align-items: center;
		gap: 3px;
		height: 16px;
		padding: 0 2px 0 4px;
		border-bottom: 1px solid #ddd;
	}

	.field {
		display: grid;
		grid-template-columns: 80px 91px;
		align-items: center;
		height: 20px;
		padding-left: 4px;
	}

	.disabled {
		color: #b5b5b5;
	}

	.disabled span:last-child {
		padding-left: 2px;
	}

	.pick {
		width: 15px;
		height: 18px;
		background: #1593d5;
	}

	.field input {
		appearance: none;
		width: 9px;
		height: 9px;
		margin: 0 3px;
		border: 1px solid #777;
		border-radius: 2px;
		background: #e3e3e3;
	}

	.field input:checked {
		background: #1593d5;
	}

	.drop {
		display: grid;
		grid-template-columns: 1fr 7px;
		align-items: center;
		height: 17px;
		border: 1px solid #d5d5d5;
		background: #fff;
	}

	.drop select {
		grid-area: 1 / 1 / 2 / 3;
		appearance: none;
		height: 17px;
		padding: 0 4px;
		border: none;
		background: none;
		color: #333;
		font: inherit;
	}

	.drop .caret {
		grid-area: 1 / 2;
		justify-self: start;
	}

	.fold {
		justify-content: flex-start;
		gap: 4px;
		width: 100%;
		height: 20px;
		color: #333;
		font-size: 8px;
		font-weight: bold;
	}

	.dialog-footer {
		display: flex;
		align-items: center;
		gap: 7px;
		height: 26px;
		padding: 0 6px 0 1px;
		border-top: 1px solid #ddd;
	}

	.dialog-footer button {
		width: 40px;
		height: 13px;
		border: 1px solid #bbb;
		background: #e9e9e9;
		color: #777;
		font-size: 8px;
	}

	.dialog-footer .ok {
		border-color: #4374a4;
		background: linear-gradient(#5e92c3, #3e6d9e);
		color: #fff;
	}

	.nav-bar {
		position: absolute;
		bottom: 4px;
		left: 50%;
		display: flex;
		gap: 4px;
		padding: 1px 2px;
		background: #f3f3f3;
		transform: translateX(-50%);
	}

	.nav-bar button {
		gap: 2px;
	}

	.selection-name {
		position: absolute;
		right: 8px;
		bottom: 6px;
		font-size: 7px;
	}

	.timeline {
		display: flex;
		align-items: center;
		gap: 14px;
		height: 32px;
		padding: 0 8px 0 6px;
		border-top: 1px solid #c5c5c5;
		background: #f1f1f1;
		color: #8d8d8d;
	}

	.transport {
		display: flex;
		gap: 7px;
		fill: #333;
	}

	.taskbar {
		display: flex;
		height: 26px;
		background: linear-gradient(90deg, #29251b, #28282a 40%, #25262a);
		color: #eee;
		font-family: 'Noto Sans', 'Open Sans', sans-serif;
	}

	.start {
		width: 32px;
	}

	.search {
		display: flex;
		align-items: center;
		gap: 7px;
		width: 222px;
		padding-left: 8px;
		background: #f1f1f1;
	}

	.search input {
		flex: 1;
		padding: 0;
		border: none;
		outline: none;
		background: none;
		font: inherit;
		font-size: 9px;
	}

	.search input::placeholder {
		color: #444;
	}

	.apps {
		display: flex;
	}

	.apps button {
		width: 33px;
		border-bottom: 1px solid transparent;
	}

	.apps .running {
		border-bottom-color: #948957;
	}

	.apps .current {
		background: #59595b;
	}

	.tray {
		display: flex;
		align-items: center;
		gap: 5px;
		margin-left: auto;
		padding-right: 12px;
		font-size: 7px;
	}

	.lang {
		padding: 0 4px;
	}

	time {
		padding-right: 6px;
		line-height: 12px;
		text-align: center;
	}
</style>
